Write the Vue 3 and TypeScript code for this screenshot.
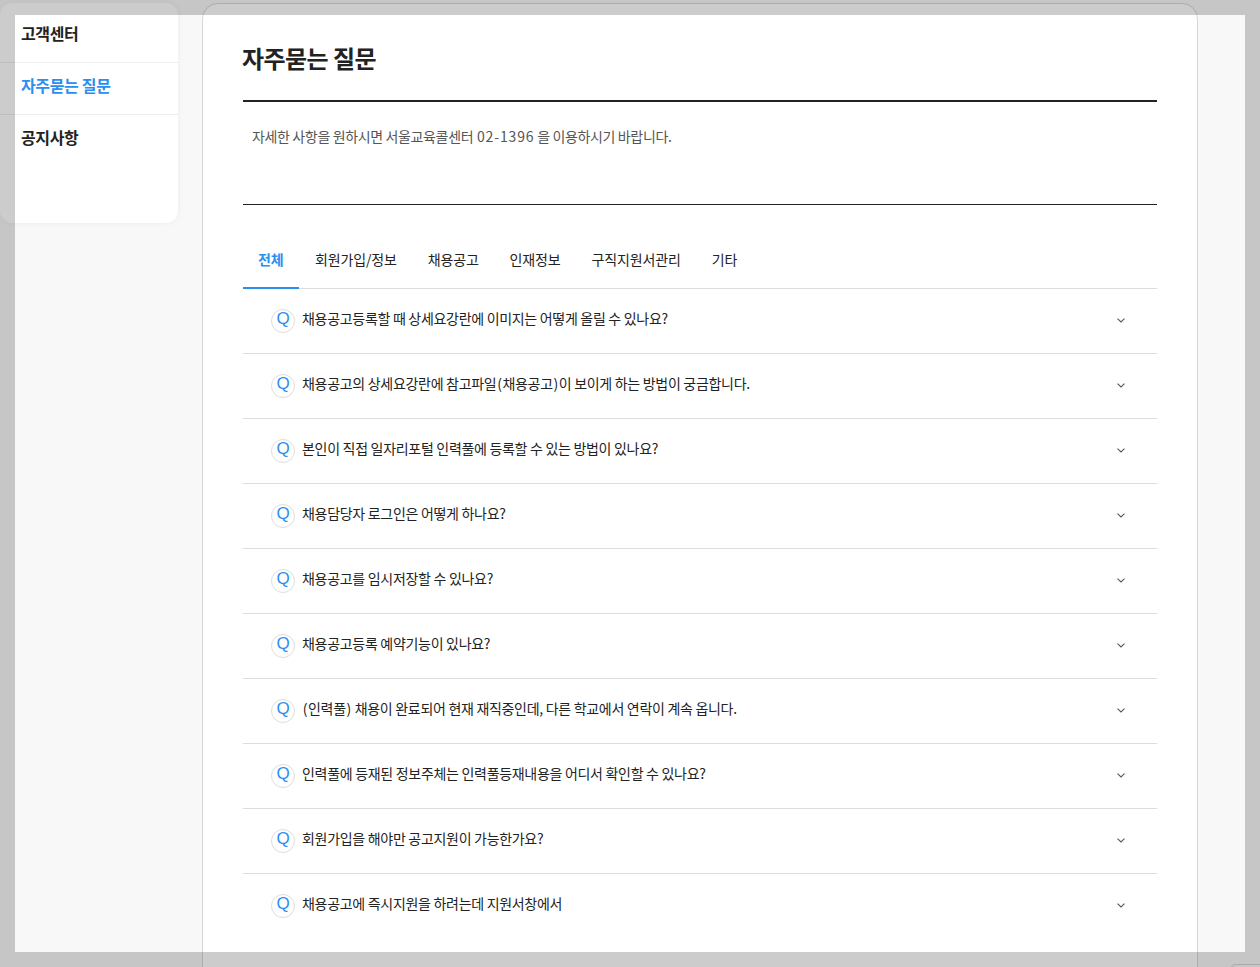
<script setup lang="ts">
const side: { label: string; active?: boolean }[] = [
  { label: '고객센터' },
  { label: '자주묻는 질문', active: true },
  { label: '공지사항' },
]
const tabs: string[] = ['전체', '회원가입/정보', '채용공고', '인재정보', '구직지원서관리', '기타']
const faqs: string[] = [
  '채용공고등록할 때 상세요강란에 이미지는 어떻게 올릴 수 있나요?',
  '채용공고의 상세요강란에 참고파일(채용공고)이 보이게 하는 방법이 궁금합니다.',
  '본인이 직접 일자리포털 인력풀에 등록할 수 있는 방법이 있나요?',
  '채용담당자 로그인은 어떻게 하나요?',
  '채용공고를 임시저장할 수 있나요?',
  '채용공고등록 예약기능이 있나요?',
  '(인력풀) 채용이 완료되어 현재 재직중인데, 다른 학교에서 연락이 계속 옵니다.',
  '인력풀에 등재된 정보주체는 인력풀등재내용을 어디서 확인할 수 있나요?',
  '회원가입을 해야만 공고지원이 가능한가요?',
  '채용공고에 즉시지원을 하려는데 지원서창에서',
]
const parts = (q: string): string[] => q.split(/([()])/).filter(Boolean)
</script>

<template>
  <div class="page">
    <aside class="side">
      <div v-for="s in side" :key="s.label" class="side-item" :class="{ on: s.active }">{{ s.label }}</div>
    </aside>
    <main class="main">
      <h1 class="title">자주묻는 질문</h1>
      <p class="notice">자세한 사항을 원하시면 서울교육콜센터 <span class="num">02-1396</span> 을 이용하시기 바랍니다.</p>
      <nav class="tabs">
        <span v-for="(t, i) in tabs" :key="t" class="tab" :class="{ on: i === 0 }">{{ t }}</span>
      </nav>
      <div v-for="q in faqs" :key="q" class="row">
        <span class="q">Q</span>
        <span class="text"><template v-for="(p, i) in parts(q)" :key="i"><span v-if="p === '(' || p === ')'" class="paren">{{ p }}</span><template v-else>{{ p }}</template></template></span>
        <svg class="chev" width="8" height="5" viewBox="0 0 8 5"><path d="M.5.7 4 4 7.5.7" fill="none" stroke="#555" stroke-width="1.1" /></svg>
      </div>
    </main>
    <div class="dim"></div>
    <div class="peek"></div>
  </div>
</template>

<style>
html, body { margin: 0; height: 100%; overflow: hidden; background: #f8f8f8; }
</style>

<style scoped>
.page {
  position: relative;
  box-sizing: border-box;
  width: 1260px;
  height: 967px;
  overflow: hidden;
  display: flex;
  align-items: flex-start;
  gap: 24px;
  padding-top: 3px;
  background: #f8f8f8;
  color: #222;
  font-family: "Noto Sans CJK KR", "Noto Sans", sans-serif;
}
.side {
  box-sizing: border-box;
  flex: none;
  width: 178px;
  height: 220px;
  padding-top: 8px;
  background: #fff;
  border-radius: 12px;
  box-shadow: 0 0 6px rgba(0, 0, 0, .05);
}
.side-item {
  box-sizing: border-box;
  height: 52px;
  padding-left: 21px;
  padding-top: 9px;
  line-height: 26px;
  font-size: 16px;
  font-weight: 700;
  letter-spacing: -.35px;
  border-bottom: 1px solid #eee;
}
.side-item:last-child { border-bottom: 0; }
.side-item.on { color: #2b8ff0; }
.main {
  box-sizing: border-box;
  flex: none;
  width: 996px;
  height: 1000px;
  padding: 0 40px;
  background: #fff;
  border: 1px solid #d8d8d8;
  border-radius: 16px 16px 0 0;
}
.title {
  box-sizing: border-box;
  margin: 0;
  height: 98px;
  padding-top: 36px;
  text-indent: -1px;
  font-size: 24px;
  line-height: 36px;
  font-weight: 700;
  letter-spacing: -.55px;
  border-bottom: 2px solid #222;
}
.notice {
  box-sizing: border-box;
  margin: 0;
  height: 103px;
  padding: 23px 0 0 9px;
  font-size: 14px;
  line-height: 22px;
  letter-spacing: -.36px;
  color: #555;
  border-bottom: 1px solid #222;
}
.num { letter-spacing: .85px; margin-left: 1px; }
.tabs {
  display: flex;
  margin-top: 33px;
  height: 50px;
  border-bottom: 1px solid #ddd;
}
.tab {
  box-sizing: border-box;
  height: 51px;
  padding: 10px 15.5px 0;
  font-size: 14px;
  line-height: 22px;
  letter-spacing: -.15px;
}
.tab.on {
  padding-left: 15px;
  padding-right: 16px;
  color: #2b8ff0;
  font-weight: 700;
  border-bottom: 2px solid #2b8ff0;
}
.row {
  box-sizing: border-box;
  display: flex;
  align-items: center;
  height: 65px;
  padding: 0 32px 0 28px;
  border-bottom: 1px solid #ddd;
}
.row:last-child { border-bottom-color: transparent; }
.q {
  box-sizing: border-box;
  flex: none;
  width: 24px;
  height: 24px;
  margin-right: 7px;
  border: 1px solid #ddd;
  border-radius: 50%;
  color: #2b8ff0;
  font-family: "Liberation Sans", sans-serif;
  font-size: 17px;
  line-height: 18px;
  text-align: center;
}
.text {
  flex: 1;
  font-size: 14px;
  line-height: 22px;
  letter-spacing: -.3px;
  margin-bottom: 6px;
}
.paren { margin: 0 .8px; }
.chev { flex: none; margin-bottom: 2px; }
.dim {
  position: absolute;
  left: 15px;
  top: 15px;
  width: 1230px;
  height: 937px;
  box-shadow: 0 0 0 2000px rgba(0, 0, 0, .2);
  pointer-events: none;
}
.peek {
  position: absolute;
  left: 1230px;
  top: 964px;
  width: 60px;
  height: 30px;
  border: 1px solid #aaa;
  border-radius: 6px;
}
</style>
